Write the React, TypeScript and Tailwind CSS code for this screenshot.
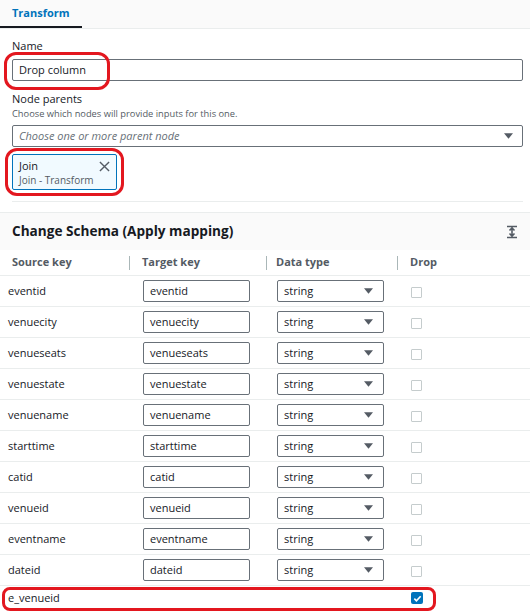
import React from "react";

// スキーマ行
const rows = [
  "eventid",
  "venuecity",
  "venueseats",
  "venuestate",
  "venuename",
  "starttime",
  "catid",
  "venueid",
  "eventname",
  "dateid",
];

const Caret: React.FC<{ className?: string }> = ({ className }) => (
  <svg viewBox="0 0 10 6" className={className} width={9} height={6}>
    <path d="M0 0h10L5 6z" fill="#545b64" />
  </svg>
);

const ExpandIcon = () => (
  <svg viewBox="0 0 12 14" width={12} height={14} fill="none" stroke="#545b64" strokeWidth={1.6}>
    <path d="M1 1.5h10M1 12.5h10M6 3v8M3.5 5.5L6 3l2.5 2.5M3.5 8.5L6 11l2.5-2.5" />
  </svg>
);

const Row: React.FC<{ name: string }> = ({ name }) => (
  <div className="grid grid-cols-[143px_134px_134px_1fr] items-center h-[31px] border-b border-[#eaeded]">
    <div className="pl-2 text-[#16191f]">{name}</div>
    <div className="h-[22px] w-[107px] border border-[#687078] rounded-[2px] px-[6px] flex items-center">{name}</div>
    <div className="h-[22px] w-[107px] border border-[#687078] rounded-[2px] pl-[6px] pr-[10px] flex items-center justify-between">
      <span>string</span>
      <Caret />
    </div>
    <div className="pt-[3px]">
      <div className="w-[11px] h-[11px] border border-[#c5cccd] rounded-[1px] bg-white" />
    </div>
  </div>
);

export default function App() {
  return (
    <div className="relative w-[530px] h-[616px] overflow-hidden bg-white text-[11px] text-[#16191f]" style={{ fontFamily: '"Open Sans", "Liberation Sans", sans-serif' }}>
      {/* タブ */}
      <div className="h-[29px] bg-[#fafafa] border-b border-[#eaeded] flex">
        <div className="w-[82px] h-[28px] border-b-2 border-[#16191f] pl-3 flex items-center font-bold text-[#0073bb]">Transform</div>
      </div>

      {/* フォーム */}
      <div className="pl-3 pr-[7px] pt-[9px]">
        <div className="leading-4">Name</div>
        <div className="mt-[5px] h-[22px] border border-[#687078] rounded-[2px] px-[6px] flex items-center">Drop column</div>
        <div className="mt-[10px] leading-4">Node parents</div>
        <div className="text-[9.3px] leading-[14px] text-[#545b64]">Choose which nodes will provide inputs for this one.</div>
        <div className="mt-[4px] h-[22px] border border-[#687078] rounded-[2px] pl-[6px] pr-[9px] flex items-center justify-between">
          <span className="italic text-[#687078]">Choose one or more parent node</span>
          <Caret />
        </div>
        <div className="mt-[7px] w-[105px] h-[36px] border border-[#0073bb] rounded-[2px] bg-[#f1faff] pl-[6px] pr-[6px] flex justify-between">
          <div className="flex flex-col justify-center">
            <span className="leading-[15px]">Join</span>
            <span className="text-[10px] leading-[14px] text-[#545b64]">Join - Transform</span>
          </div>
          <svg viewBox="0 0 12 12" width={11} height={11} className="mt-[6px]" stroke="#545b64" strokeWidth={1.5}>
            <path d="M1 1l10 10M11 1L1 11" />
          </svg>
        </div>
        <div className="mt-[11px] border-t border-[#eaeded]" />
      </div>

      {/* スキーマパネル */}
      <div className="mt-[10px] border-t border-[#eaeded]">
        <div className="h-[37px] bg-[#fafafa] px-3 flex items-center justify-between">
          <span className="text-[13.6px] font-bold">Change Schema (Apply mapping)</span>
          <ExpandIcon />
        </div>
        <div className="grid grid-cols-[129px_137px_131px_1fr] h-[26px] items-center border-b border-[#eaeded] font-bold text-[#545b64]">
          <div className="pl-3">Source key</div>
          <div className="flex items-center"><span className="w-px h-[14px] bg-[#aab7b8] mr-3" />Target key</div>
          <div className="flex items-center"><span className="w-px h-[14px] bg-[#aab7b8] mr-[9px]" />Data type</div>
          <div className="flex items-center"><span className="w-px h-[14px] bg-[#aab7b8] mr-3" />Drop</div>
        </div>
        {rows.map((r) => (
          <Row key={r} name={r} />
        ))}
        <div className="grid grid-cols-[411px_1fr] items-center h-[24px]">
          <div className="pl-2">e_venueid</div>
          <div className="w-[12px] h-[12px] rounded-[2px] bg-[#0073bb] flex items-center justify-center">
            <svg viewBox="0 0 10 10" width={9} height={9} fill="none" stroke="#fff" strokeWidth={1.8}>
              <path d="M1.5 5.2l2.3 2.3L8.5 2.5" />
            </svg>
          </div>
        </div>
      </div>

      {/* 赤い注釈 */}
      <div className="absolute left-[4px] top-[52px] w-[106px] h-[38px] border-[3px] border-[#e3171f] rounded-[12px]" />
      <div className="absolute left-[5px] top-[148px] w-[119px] h-[48px] border-[3px] border-[#e3171f] rounded-[12px]" />
      <div className="absolute left-[2px] top-[587px] w-[434px] h-[24px] border-[3px] border-[#e3171f] rounded-[8px]" />
    </div>
  );
}
